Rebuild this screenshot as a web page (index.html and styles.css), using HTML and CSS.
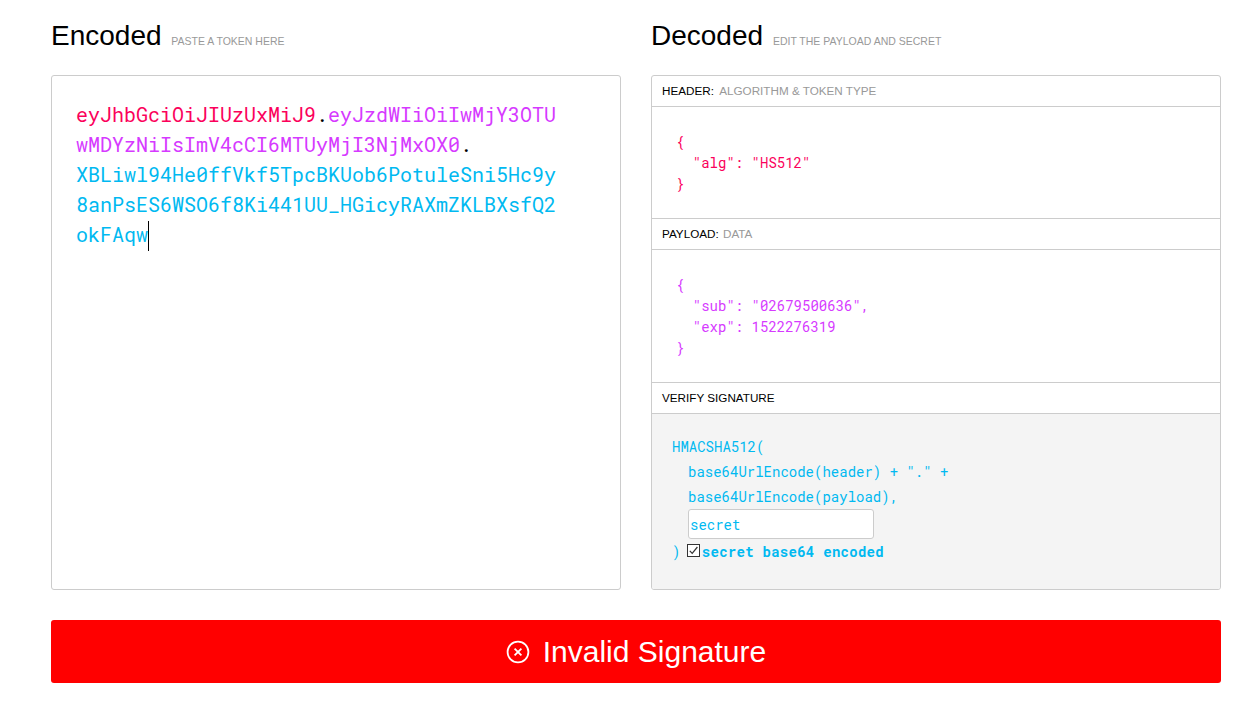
FILE: index.html
```html
<!DOCTYPE html>
<html lang="en">
<head>
<meta charset="utf-8">
<title>JWT Debugger</title>
<link rel="stylesheet" href="styles.css">
</head>
<body>
<main class="page">
  <div class="columns">
    <section class="column">
      <h2 class="title">Encoded <small class="subtitle">PASTE A TOKEN HERE</small></h2>
      <div class="panel encoded">
        <div class="token"><span class="red">eyJhbGciOiJIUzUxMiJ9</span><span class="dot">.</span><span class="purple">eyJzdWIiOiIwMjY3OTUwMDYzNiIsImV4cCI6MTUyMjI3NjMxOX0</span><span class="dot">.</span><br><span class="blue">XBLiwl94He0ffVkf5TpcBKUob6PotuleSni5Hc9y8anPsES6WSO6f8Ki441UU_HGicyRAXmZKLBXsfQ2okFAqw</span><span class="caret"></span></div>
      </div>
    </section>
    <section class="column">
      <h2 class="title">Decoded <small class="subtitle">EDIT THE PAYLOAD AND SECRET</small></h2>
      <div class="panel decoded">
        <div class="head">HEADER: <span class="muted">ALGORITHM &amp; TOKEN TYPE</span></div>
        <pre class="json red">{
  "alg": "HS512"
}</pre>
        <div class="head">PAYLOAD: <span class="muted muted-tight">DATA</span></div>
        <pre class="json purple payload">{
  "sub": "02679500636",
  "exp": 1522276319
}</pre>
        <div class="head">VERIFY SIGNATURE</div>
        <div class="verify blue">
          <div class="vline">HMACSHA512(</div>
          <div class="vline indent">base64UrlEncode(header) + "." +</div>
          <div class="vline indent">base64UrlEncode(payload),</div>
          <div class="indent"><input class="secret" type="text" value="secret" aria-label="secret"></div>
          <div class="vlast">) <span class="check"><svg width="13" height="13" viewBox="0 0 13 13"><rect x="0.5" y="0.5" width="12" height="12" fill="#fff" stroke="#333"/><path d="M2.8 6.8 5.2 9.4 10.4 3" fill="none" stroke="#333" stroke-width="1.2"/></svg></span><strong>secret base64 encoded</strong></div>
        </div>
      </div>
    </section>
  </div>
  <div class="status">
    <svg class="status-icon" width="24" height="24" viewBox="0 0 24 24"><circle cx="12" cy="12" r="10.4" fill="none" stroke="#fff" stroke-width="1.8"/><path d="M8.6 8.6 15.4 15.4M15.4 8.6 8.6 15.4" fill="none" stroke="#fff" stroke-width="1.8"/></svg>
    <span>Invalid Signature</span>
  </div>
</main>
</body>
</html>
```
FILE: styles.css
```css
* { box-sizing: border-box; }
html, body { margin: 0; background: #fff; }
body { font-family: "Liberation Sans", Arial, sans-serif; color: #000; }
.page { width: 1170px; margin-left: 51px; }
.columns { display: flex; gap: 30px; }
.column { width: 570px; }
.title { margin: 0; height: 75px; padding-top: 18px; font-size: 28px; line-height: 36px; font-weight: 400; }
.subtitle { margin-left: 2px; font-size: 10.5px; color: #999; text-transform: uppercase; }
.panel { height: 515px; border: 1px solid #ccc; border-radius: 3px; overflow: hidden; font-family: "Roboto Mono", "DejaVu Sans Mono", monospace; }
.encoded { padding: 23px 24px; }
.token { font-size: 20px; line-height: 30px; word-break: break-all; width: 482px; }
.red { color: #fb015b; }
.purple { color: #d63aff; }
.blue { color: #00b9f1; }
.dot { color: #000; }
.caret { display: inline-block; position: relative; top: -1px; width: 1px; height: 30px; background: #000; vertical-align: middle; }
.decoded { display: flex; flex-direction: column; }
.head { height: 31px; padding: 0 10px; font: 11.7px/30px "Liberation Sans", Arial, sans-serif; border-bottom: 1px solid #ccc; }
.muted { color: #999; margin-left: 2px; }
.muted-tight { margin-left: 1px; }
.json { margin: 0; height: 112px; padding: 24px 24px 0; font: inherit; font-size: 14px; line-height: 21px; border-bottom: 1px solid #ccc; white-space: pre; }
.payload { height: 133px; }
.verify { flex: 1; background: #f4f4f4; padding: 20px 20px; font-size: 14px; }
.vline { line-height: 25px; }
.indent { padding-left: 16px; }
.secret { display: block; width: 186px; height: 30px; margin-top: 0; padding: 0 1px; border: 1px solid #ccc; border-radius: 3px; background: #fff; color: #00b9f1; font: inherit; font-size: 14px; }
.vlast { line-height: 26px; }
.check { display: inline-block; width: 15px; height: 14px; margin-left: -2px; vertical-align: -1px; }
.check svg { display: block; }
strong { font-weight: 700; letter-spacing: 0.27px; }
.status { display: flex; align-items: center; justify-content: center; gap: 13px; height: 63px; margin-top: 30px; background: #f00; border-radius: 3px; color: #fff; font-size: 30px; }
```
